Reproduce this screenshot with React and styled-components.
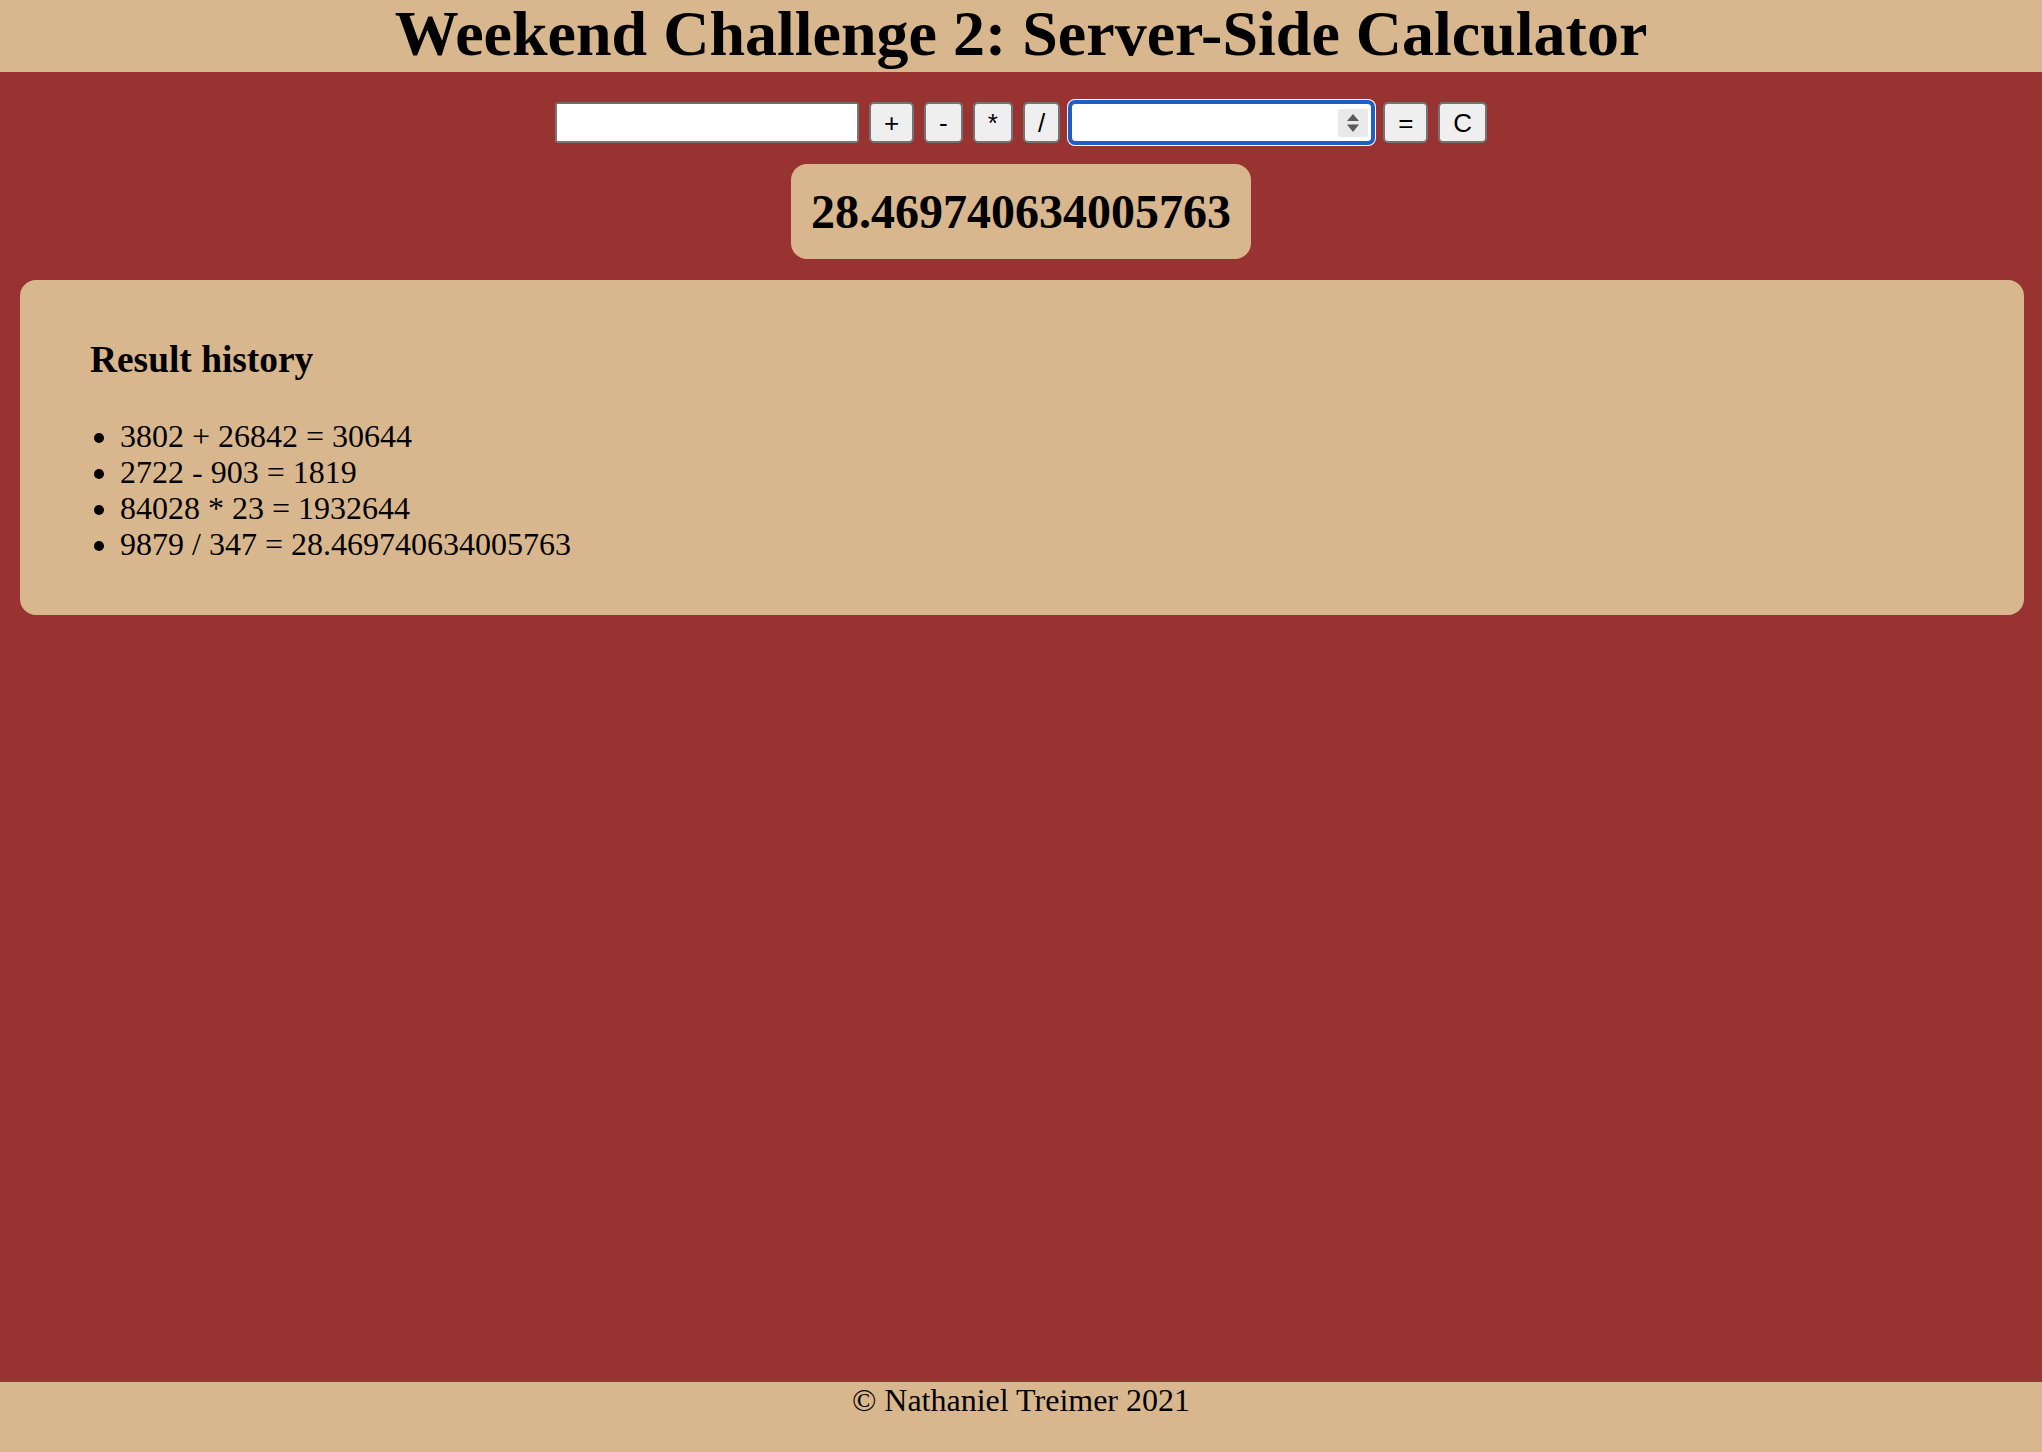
import React from "react";
import styled, { createGlobalStyle } from "styled-components";

const TAN = "#d9b78e";
const RED = "#993331";

const GlobalStyle = createGlobalStyle`
  html, body {
    margin: 0;
    padding: 0;
  }
  body {
    background: ${RED};
    font-family: "Liberation Serif", "Times New Roman", Times, serif;
    font-size: 32px;
    color: #000;
  }
  * { box-sizing: border-box; }
`;

const Page = styled.div`
  min-height: 100vh;
  display: flex;
  flex-direction: column;
  background: ${RED};
`;

const Header = styled.header`
  background: ${TAN};
  height: 72px;
  padding-bottom: 5px;
`;

const Title = styled.h1`
  margin: 0;
  font-size: 64px;
  line-height: 67px;
  font-weight: bold;
  text-align: center;
  white-space: nowrap;
`;

const Main = styled.main`
  flex: 1;
  display: flex;
  flex-direction: column;
  align-items: center;
  padding-top: 30px;
  gap: 21px;
`;

const Toolbar = styled.form`
  display: flex;
  align-items: center;
  gap: 10px;
  margin: 0;
`;

const TextInput = styled.input`
  width: 304px;
  height: 41px;
  border: 2px solid #777;
  border-top-color: #6c6c6c;
  border-radius: 3px;
  background: #fff;
  padding: 0 6px;
  font-family: "Liberation Sans", Arial, sans-serif;
  font-size: 26px;
  outline: none;
`;

const NumberField = styled.div`
  display: flex;
  align-items: center;
  width: 303px;
  height: 41px;
  border: 2px solid #777;
  border-radius: 5px;
  background: #fff;
  padding: 0 3px 0 6px;
  outline: ${(p) => (p.$focused ? "4px solid #1d5fc9" : "none")};
  outline-offset: -2px;
  box-shadow: ${(p) => (p.$focused ? "0 0 0 3px #fff" : "none")};
`;

const BareInput = styled.input`
  flex: 1;
  min-width: 0;
  height: 100%;
  border: none;
  outline: none;
  background: transparent;
  font-family: "Liberation Sans", Arial, sans-serif;
  font-size: 26px;
  padding: 0;
`;

const Spinner = styled.span`
  display: flex;
  width: 30px;
  height: 28px;
  background: #e9e9e9;
  border-radius: 2px;
`;

const OpButton = styled.button`
  height: 41px;
  padding: 0 13px;
  min-width: ${(p) => (p.$wide ? "48px" : "0")};
  border: 2px solid #747474;
  border-radius: 5px;
  background: #efefef;
  color: #000;
  font-family: "Liberation Sans", Arial, sans-serif;
  font-size: 26px;
  line-height: 1;
  cursor: pointer;
`;

const ResultBox = styled.div`
  background: ${TAN};
  border-radius: 16px;
  padding: 20px;
`;

const ResultValue = styled.h2`
  margin: 0;
  font-size: 48px;
  line-height: 55px;
  font-weight: bold;
`;

const HistoryPanel = styled.section`
  align-self: stretch;
  margin: 0 18px 0 20px;
  background: ${TAN};
  border-radius: 16px;
  padding: 20px;
`;

const HistoryTitle = styled.h3`
  margin: 39px 0 37px 50px;
  font-size: 37.4px;
  line-height: 42px;
  font-weight: bold;
`;

const HistoryList = styled.ul`
  margin: 0 0 33px;
  padding-left: 80px;
  list-style: disc;
`;

const HistoryItem = styled.li`
  font-size: 32px;
  line-height: 36px;
`;

const Footer = styled.footer`
  background: ${TAN};
  height: 70px;
  text-align: center;
`;

const FooterText = styled.p`
  margin: 0;
  font-size: 32px;
  line-height: 36px;
`;

const history = [
  "3802 + 26842 = 30644",
  "2722 - 903 = 1819",
  "84028 * 23 = 1932644",
  "9879 / 347 = 28.469740634005763",
];

const ops = ["+", "-", "*", "/"];

export default function App() {
  return (
    <Page>
      <GlobalStyle />
      <Header>
        <Title>Weekend Challenge 2: Server-Side Calculator</Title>
      </Header>
      <Main>
        <Toolbar onSubmit={(e) => e.preventDefault()}>
          <TextInput type="text" aria-label="first number" />
          {ops.map((op) => (
            <OpButton key={op} type="button">
              {op}
            </OpButton>
          ))}
          <NumberField $focused>
            <BareInput type="text" inputMode="numeric" aria-label="second number" />
            <Spinner>
              <svg width="30" height="28" viewBox="0 0 30 28">
                <polygon points="9,12 21,12 15,5" fill="#5a5a5a" />
                <polygon points="9,15.5 21,15.5 15,23" fill="#5a5a5a" />
              </svg>
            </Spinner>
          </NumberField>
          <OpButton type="submit">=</OpButton>
          <OpButton type="button" $wide>
            C
          </OpButton>
        </Toolbar>
        <ResultBox>
          <ResultValue>28.469740634005763</ResultValue>
        </ResultBox>
        <HistoryPanel>
          <HistoryTitle>Result history</HistoryTitle>
          <HistoryList>
            {history.map((h) => (
              <HistoryItem key={h}>{h}</HistoryItem>
            ))}
          </HistoryList>
        </HistoryPanel>
      </Main>
      <Footer>
        <FooterText>© Nathaniel Treimer 2021</FooterText>
      </Footer>
    </Page>
  );
}
